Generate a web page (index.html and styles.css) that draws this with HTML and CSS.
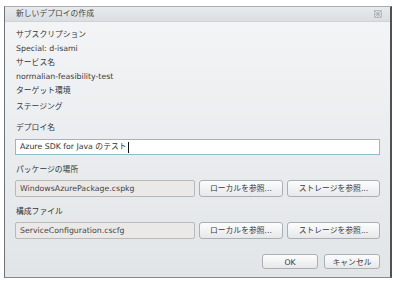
FILE: index.html
```html
<!DOCTYPE html>
<html lang="ja">
<head>
<meta charset="utf-8">
<link rel="stylesheet" href="styles.css">
</head>
<body>
<div class="dialog">
  <div class="titlebar">
    <span class="title">新しいデプロイの作成</span>
    <svg class="close" width="8" height="8" viewBox="0 0 8 8">
      <rect x="0.5" y="0.5" width="7" height="7" fill="none" stroke="#b4b6b8" stroke-width="0.8"/>
      <path d="M1 1 L7 7 M7 1 L1 7 M4 0.5 V7.5 M0.5 4 H7.5" stroke="#a6a8aa" stroke-width="0.7"/>
    </svg>
  </div>
  <div class="body">
    <div class="group">
      <div class="label">サブスクリプション</div>
      <div class="value">Special: d-isami</div>
    </div>
    <div class="group">
      <div class="label">サービス名</div>
      <div class="value">normalian-feasibility-test</div>
    </div>
    <div class="group">
      <div class="label">ターゲット環境</div>
      <div class="value value-low">ステージング</div>
    </div>
    <div class="section first">
      <div class="label">デプロイ名</div>
      <div class="input">Azure SDK for Java のテスト<span class="caret"></span></div>
    </div>
    <div class="section">
      <div class="label">パッケージの場所</div>
      <div class="row">
        <div class="field">WindowsAzurePackage.cspkg</div>
        <button class="btn local">ローカルを参照...</button>
        <button class="btn storage">ストレージを参照...</button>
      </div>
    </div>
    <div class="section">
      <div class="label">構成ファイル</div>
      <div class="row">
        <div class="field">ServiceConfiguration.cscfg</div>
        <button class="btn local">ローカルを参照...</button>
        <button class="btn storage">ストレージを参照...</button>
      </div>
    </div>
    <div class="footer">
      <button class="btn ok">OK</button>
      <button class="btn cancel">キャンセル</button>
    </div>
  </div>
</div>
</body>
</html>
```

FILE: styles.css
```css
html, body {
  margin: 0;
  padding: 0;
  background: #ffffff;
}

body {
  font-family: "DejaVu Sans", "Noto Sans CJK JP", sans-serif;
  font-size: 7.8px;
  color: #3a3a3a;
}

.dialog {
  margin: 6px 0 0 4px;
  width: 388px;
  height: 272px;
  box-sizing: border-box;
  border: 1px solid #a9adb0;
  border-left-color: #6f7275;
  border-right: 2px solid #4f5153;
  border-bottom-color: #86898c;
  background: linear-gradient(#f3f5f7, #e2e5e7);
  display: flex;
  flex-direction: column;
}

.titlebar {
  height: 14px;
  border-bottom: 1px solid #cfd3d6;
  background: linear-gradient(#e8ebed, #dadee1);
  display: flex;
  align-items: center;
  justify-content: space-between;
  padding: 0 8px 0 11px;
}

.title {
  color: #444;
  line-height: 14px;
}

.close {
  display: block;
}

.body {
  padding: 6px 10px 0 10px;
  display: flex;
  flex-direction: column;
}

.label,
.value {
  line-height: 14px;
  padding-left: 1px;
  white-space: nowrap;
}

.label {
  color: #333;
}

.value-low {
  margin-top: 2px;
}

.section {
  margin-top: 8px;
}

.section.first {
  margin-top: 7px;
}

.section.first .label {
  margin-bottom: 4px;
}

.section .label {
  margin-bottom: 3px;
}

.input {
  height: 16px;
  box-sizing: border-box;
  border: 1px solid #8fbccb;
  background: #ffffff;
  padding: 0 4px;
  line-height: 14px;
  display: flex;
  align-items: center;
  white-space: nowrap;
  color: #333;
}

.caret {
  display: inline-block;
  width: 0;
  height: 11px;
  border-left: 1px solid #111;
  margin-left: 1px;
}

.row {
  display: flex;
  gap: 4px;
  height: 17px;
}

.field {
  width: 180px;
  box-sizing: border-box;
  border: 1px solid #b9b9b9;
  border-radius: 2px;
  background: #ebe9e8;
  padding: 0 4px;
  line-height: 15px;
  color: #454545;
  white-space: nowrap;
}

.btn {
  margin: 0;
  padding: 0;
  font: inherit;
  color: #3a3a3a;
  box-sizing: border-box;
  border: 1px solid #adb0b3;
  border-radius: 3px;
  background: linear-gradient(#fdfdfd, #e6e8ea);
  line-height: 15px;
  white-space: nowrap;
}

.local {
  width: 84px;
}

.storage {
  width: 93px;
}

.footer {
  margin-top: 15px;
  display: flex;
  justify-content: flex-end;
  gap: 6px;
  height: 15px;
}

.ok,
.cancel {
  width: 56px;
}
```
